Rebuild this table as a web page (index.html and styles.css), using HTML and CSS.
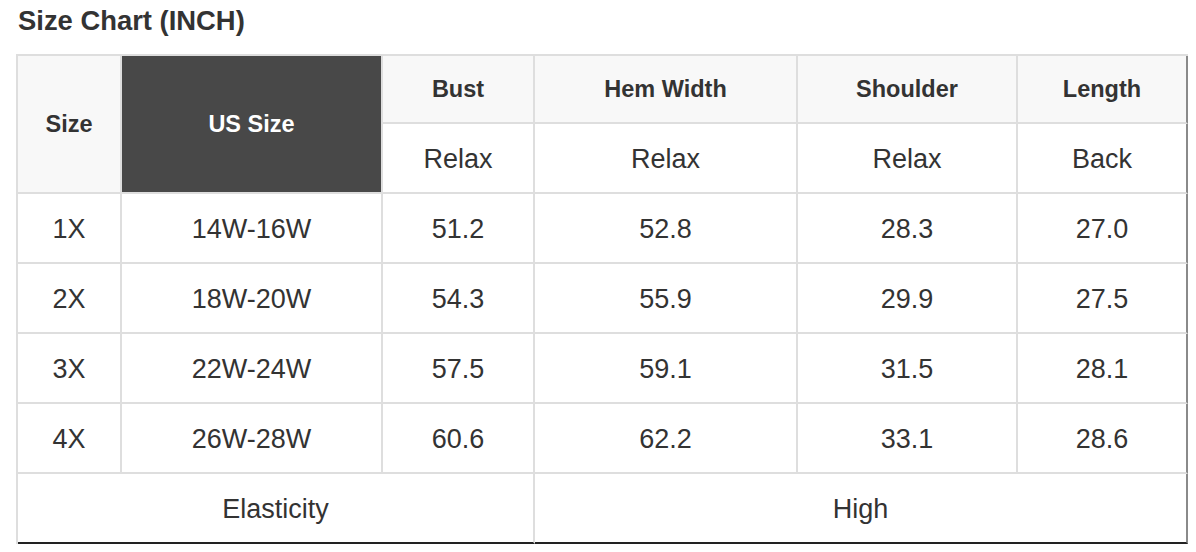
FILE: index.html
```html
<!DOCTYPE html>
<html lang="en">
<head>
<meta charset="utf-8">
<title>Size Chart</title>
<link rel="stylesheet" href="styles.css">
</head>
<body>
<div class="page">
  <h2 class="title">Size Chart (INCH)</h2>
  <div class="chart">
    <div class="cell head span-r2">Size</div>
    <div class="cell head dark span-r2">US Size</div>
    <div class="cell head">Bust</div>
    <div class="cell head">Hem Width</div>
    <div class="cell head">Shoulder</div>
    <div class="cell head last">Length</div>
    <div class="cell">Relax</div>
    <div class="cell">Relax</div>
    <div class="cell">Relax</div>
    <div class="cell last">Back</div>

    <div class="cell">1X</div><div class="cell">14W-16W</div><div class="cell">51.2</div><div class="cell">52.8</div><div class="cell">28.3</div><div class="cell last">27.0</div>
    <div class="cell">2X</div><div class="cell">18W-20W</div><div class="cell">54.3</div><div class="cell">55.9</div><div class="cell">29.9</div><div class="cell last">27.5</div>
    <div class="cell">3X</div><div class="cell">22W-24W</div><div class="cell">57.5</div><div class="cell">59.1</div><div class="cell">31.5</div><div class="cell last">28.1</div>
    <div class="cell">4X</div><div class="cell">26W-28W</div><div class="cell">60.6</div><div class="cell">62.2</div><div class="cell">33.1</div><div class="cell last">28.6</div>

    <div class="cell foot span-c3">Elasticity</div>
    <div class="cell foot span-c3 last">High</div>
  </div>
</div>
</body>
</html>
```

FILE: styles.css
```css
* { box-sizing: border-box; }

html, body {
  margin: 0;
  padding: 0;
  background: #ffffff;
}

.page {
  padding: 5px 16px 0 16px;
  font-family: "Liberation Sans", Arial, Helvetica, sans-serif;
  color: #333333;
}

.title {
  margin: 0 0 18px 2px;
  font-size: 27.4px;
  line-height: 31px;
  font-weight: bold;
  color: #333333;
}

.chart {
  display: grid;
  grid-template-columns: 104px 261px 152px 263px 220px 170px;
  grid-template-rows: 68px 70px 70px 70px 70px 70px 70px;
  width: 1172px;
  border-top: 2px solid #dedede;
  border-left: 2px solid #dedede;
}

.cell {
  display: flex;
  align-items: center;
  justify-content: center;
  padding-top: 2px;
  border-right: 2px solid #dedede;
  border-bottom: 2px solid #dedede;
  font-size: 27px;
  color: #333333;
  background: #ffffff;
}

.head {
  padding-top: 0;
  background: #f8f8f8;
  font-size: 23.5px;
  font-weight: bold;
}

.dark {
  background: #484848;
  color: #ffffff;
}

.span-r2 { grid-row: span 2; }
.span-c3 { grid-column: span 3; }

.last { border-right-color: #8a8a8a; }

.foot { border-bottom-color: #222222; }
```
